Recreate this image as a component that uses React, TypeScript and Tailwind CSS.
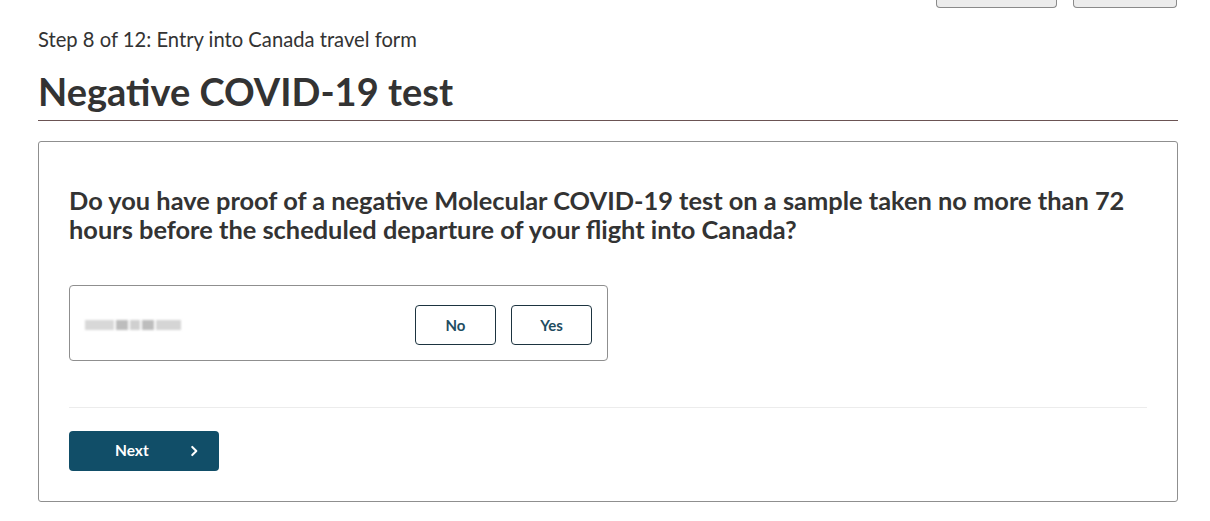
const ChevronRight = () => (
  <svg width="14" height="14" viewBox="0 0 24 24" fill="none" stroke="currentColor" strokeWidth="3.5" strokeLinecap="round" strokeLinejoin="round">
    <path d="M9 5l7 7-7 7" />
  </svg>
);

const ChoiceButton = ({ label }: { label: string }) => (
  <button className="h-[40px] w-[81px] rounded-[4px] border border-[#1d3440] bg-white text-[15px] font-bold text-[#1f4d61]">
    {label}
  </button>
);

export default function App() {
  return (
    <div className="min-h-[521px] bg-white font-['Lato','Liberation_Sans',sans-serif] text-[#333333]">
      <div className="ml-[38px] w-[1140px]">
        <div className="flex h-[8px] justify-end gap-[16px]">
          <div className="h-[8px] w-[121px] rounded-b-[4px] border border-t-0 border-[#8a8a8a] bg-[#ececec]" />
          <div className="mr-[1px] h-[8px] w-[104px] rounded-b-[4px] border border-t-0 border-[#8a8a8a] bg-[#ececec]" />
        </div>

        <p className="mt-[19px] text-[20.2px] leading-[24px] text-[#333]">
          Step 8 of 12: Entry into Canada travel form
        </p>
        <h1 className="mt-[16px] text-[38px] font-bold leading-[48px] text-[#333]">
          Negative COVID-19 test
        </h1>
        <div className="mt-[5px] h-px bg-[#6b5454]" />

        <div className="mt-[20px] rounded-[3px] border border-[#8f8f8f] px-[30px] pt-[44px] pb-[30px]">
          <h2 className="text-[25.4px] font-bold leading-[29px] text-[#333]">
            Do you have proof of a negative Molecular COVID-19 test on a sample taken no more than 72
            <br />
            hours before the scheduled departure of your flight into Canada?
          </h2>

          <div className="mt-[41px] flex h-[76px] w-[539px] items-center justify-between rounded-[4px] border border-[#8f8f8f] pt-[4px] pl-[15px] pr-[15px]">
            <div className="flex h-[10px] w-[96px] gap-[2px] blur-[1px]">
              <div className="h-full w-[30px] bg-[#d8d8d8]" />
              <div className="h-full w-[12px] bg-[#bdbdbd]" />
              <div className="h-full w-[10px] bg-[#d0d0d0]" />
              <div className="h-full w-[12px] bg-[#bdbdbd]" />
              <div className="h-full w-[26px] bg-[#d5d5d5]" />
            </div>
            <div className="flex gap-[15px]">
              <ChoiceButton label="No" />
              <ChoiceButton label="Yes" />
            </div>
          </div>

          <div className="mt-[46px] h-px bg-[#ececec]" />

          <button className="mt-[23px] flex h-[40px] w-[150px] items-center rounded-[4px] bg-[#114e68] pl-[46px] text-[15.5px] font-bold text-white">
            <span>Next</span>
            <span className="ml-[38px]">
              <ChevronRight />
            </span>
          </button>
        </div>
      </div>
    </div>
  );
}
